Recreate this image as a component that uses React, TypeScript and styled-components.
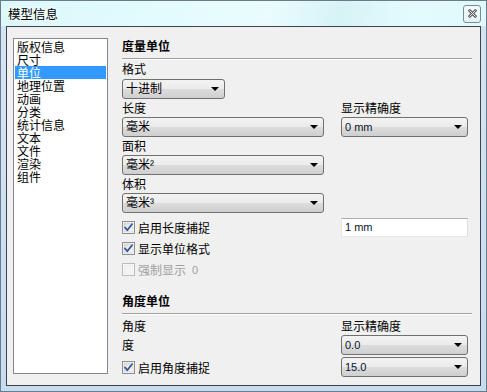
import styled, { createGlobalStyle } from 'styled-components';

const GlobalStyle = createGlobalStyle`
  html, body {
    margin: 0;
    padding: 0;
    background: #ffffff;
  }
  body {
    font-family: 'Liberation Sans', 'Noto Sans CJK SC', sans-serif;
    font-size: 12px;
    color: #000;
  }
  * {
    box-sizing: border-box;
  }
`;

const Window = styled.div`
  width: 487px;
  height: 392px;
  border: 1px solid #6d7b88;
  background: linear-gradient(180deg, #d3e6f6 0%, #c6dcf0 100%);
  display: flex;
  flex-direction: column;
`;

const TitleBar = styled.div`
  height: 25px;
  flex: none;
  display: flex;
  align-items: center;
  justify-content: space-between;
  padding: 0 5px 0 7px;
  background: linear-gradient(
    100deg,
    #dbf8fb 0%,
    #e2fbfd 30%,
    #eafcfd 55%,
    #d6f3f6 70%,
    #e4fbfd 85%,
    #dff9fb 100%
  );
`;

const Title = styled.span`
  font-family: 'Noto Sans CJK SC', sans-serif;
  font-size: 12.5px;
  line-height: 16px;
  text-shadow: 0 0 4px #ffffff, 0 0 6px #ffffff;
`;

const CloseButton = styled.button`
  width: 18px;
  height: 18px;
  padding: 0;
  border: 1px solid #7c8a96;
  border-radius: 3px;
  background: linear-gradient(180deg, #f4fbfd 0%, #e3f4f7 100%);
  display: flex;
  align-items: center;
  justify-content: center;
`;

const Frame = styled.div`
  flex: 1;
  padding: 0 5px 5px 5px;
  display: flex;
`;

const Panel = styled.div`
  flex: 1;
  border: 1px solid #3f4347;
  background: #f0f0f0;
  display: flex;
  align-items: flex-start;
  padding: 11px 0 0 6px;
`;

const ListBox = styled.ul`
  width: 95px;
  height: 336px;
  margin: 0;
  padding: 1px;
  list-style: none;
  border: 1px solid #828790;
  background: #ffffff;
  flex: none;
`;

// rows are packed at a 13px pitch like the original list control
const ListItem = styled.li<{ $selected?: boolean }>`
  font-family: 'Noto Sans CJK SC', sans-serif;
  font-size: 12px;
  line-height: 13px;
  height: 13px;
  padding-left: 2px;
  color: ${(p) => (p.$selected ? '#ffffff' : '#000000')};
  background: ${(p) => (p.$selected ? '#3399ff' : 'transparent')};
`;

const Pane = styled.div`
  margin-left: 14px;
  width: 350px;
  display: flex;
  flex-direction: column;
`;

const Heading = styled.div<{ $top?: number }>`
  margin-top: ${(p) => p.$top || 0}px;
  font-family: 'Noto Sans CJK SC', sans-serif;
  font-weight: 700;
  font-size: 12px;
  line-height: 16px;
  padding-bottom: 4px;
  border-bottom: 1px solid #a0a0a0;
  box-shadow: 0 1px 0 #ffffff;
`;

const Label = styled.div<{ $h?: number; $pt?: number }>`
  font-family: 'Noto Sans CJK SC', sans-serif;
  font-size: 12px;
  height: ${(p) => p.$h || 18}px;
  line-height: ${(p) => (p.$h || 18) - (p.$pt || 0)}px;
  padding-top: ${(p) => p.$pt || 0}px;
  white-space: nowrap;
`;

const Row = styled.div<{ $h?: number; $top?: number }>`
  display: grid;
  grid-template-columns: 202px 127px;
  column-gap: 17px;
  align-items: center;
  height: ${(p) => p.$h || 20}px;
  margin-top: ${(p) => p.$top || 0}px;
`;

const Combo = styled.div<{ $w?: number; $latin?: boolean }>`
  width: ${(p) => (p.$w ? `${p.$w}px` : '100%')};
  height: 20px;
  border: 1px solid #707070;
  border-radius: 3px;
  background: linear-gradient(180deg, #f3f3f3 0%, #ebebeb 50%, #dddddd 50%, #cfcfcf 100%);
  display: flex;
  align-items: center;
  justify-content: space-between;
  padding: 0 5px 0 3px;
  font-family: 'Liberation Sans', 'Noto Sans CJK SC', sans-serif;
  font-size: ${(p) => (p.$latin ? 11 : 12)}px;
  color: ${(p) => (p.$latin ? '#0a1430' : '#000')};
  line-height: 18px;
`;

const Arrow = styled.span`
  width: 0;
  height: 0;
  border-left: 4px solid transparent;
  border-right: 4px solid transparent;
  border-top: 4px solid #000;
`;

const TextInput = styled.div`
  height: 19px;
  border: 1px solid #abadb3;
  border-left-color: #e2e3ea;
  border-right-color: #dbdfe6;
  border-bottom-color: #e3e9ef;
  background: #ffffff;
  padding: 0 3px;
  font-size: 11px;
  line-height: 17px;
  color: #0a1430;
`;

const CheckWrap = styled.label<{ $disabled?: boolean }>`
  display: flex;
  align-items: center;
  gap: 3px;
  font-family: 'Noto Sans CJK SC', sans-serif;
  font-size: 12px;
  color: ${(p) => (p.$disabled ? '#a0a0a0' : '#000')};
  white-space: nowrap;
`;

const Small = styled.span`
  font-family: 'Liberation Sans', sans-serif;
  font-size: 11px;
  margin-left: 3px;
`;

const CheckIcon = ({ checked, disabled }: { checked?: boolean; disabled?: boolean }) => (
  <svg width="13" height="13" viewBox="0 0 13 13">
    <defs>
      <linearGradient id={disabled ? 'cbd' : 'cbg'} x1="0" y1="0" x2="1" y2="1">
        <stop offset="0" stopColor={disabled ? '#f0f0f0' : '#dcdcdc'} />
        <stop offset="1" stopColor={disabled ? '#f8f8f8' : '#fbfbfb'} />
      </linearGradient>
    </defs>
    <rect x="0.5" y="0.5" width="12" height="12" fill="#fff" stroke={disabled ? '#bcbcbc' : '#8e8f8f'} />
    <rect x="2" y="2" width="9" height="9" fill={`url(#${disabled ? 'cbd' : 'cbg'})`} stroke={disabled ? '#e0e0e0' : '#c4c4c4'} strokeWidth="0.6" />
    {checked && (
      <path d="M3 6.5 L5.3 9.2 L10 3.2" fill="none" stroke="#35569c" strokeWidth="1.8" strokeLinecap="round" strokeLinejoin="round" />
    )}
  </svg>
);

const CheckBox = ({ label, checked, disabled, extra }: { label: string; checked?: boolean; disabled?: boolean; extra?: string }) => (
  <CheckWrap $disabled={disabled}>
    <CheckIcon checked={checked} disabled={disabled} />
    <span>{label}</span>
    {extra && <Small>{extra}</Small>}
  </CheckWrap>
);

const Select = ({ value, w, latin }: { value: string; w?: number; latin?: boolean }) => (
  <Combo $w={w} $latin={latin}>
    <span>{value}</span>
    <Arrow />
  </Combo>
);

const items = ['版权信息', '尺寸', '单位', '地理位置', '动画', '分类', '统计信息', '文本', '文件', '渲染', '组件'];

const App = () => (
  <>
    <GlobalStyle />
    <Window>
      <TitleBar>
        <Title>模型信息</Title>
        <CloseButton type="button" aria-label="关闭">
          <svg width="9" height="9" viewBox="0 0 9 9">
            <path d="M1.8 1.8 L7.2 7.2 M7.2 1.8 L1.8 7.2" stroke="#5a5a5a" strokeWidth="2.8" strokeLinecap="square" />
            <path d="M1.8 1.8 L7.2 7.2 M7.2 1.8 L1.8 7.2" stroke="#f4f4f4" strokeWidth="1" strokeLinecap="square" />
          </svg>
        </CloseButton>
      </TitleBar>
      <Frame>
        <Panel>
          <ListBox>
            {items.map((el) => (
              <ListItem key={el} $selected={el === '单位'}>
                {el}
              </ListItem>
            ))}
          </ListBox>
          <Pane>
            <Heading>度量单位</Heading>
            <Label $h={20}>格式</Label>
            <Select value="十进制" w={103} />
            <Row $h={18}>
              <Label>长度</Label>
              <Label>显示精确度</Label>
            </Row>
            <Row>
              <Select value="毫米" />
              <Select value="0 mm" latin />
            </Row>
            <Label>面积</Label>
            <Select value="毫米²" w={202} />
            <Label>体积</Label>
            <Select value="毫米³" w={202} />
            <Row $h={21} $top={4}>
              <CheckBox label="启用长度捕捉" checked />
              <TextInput>1 mm</TextInput>
            </Row>
            <Row $h={21}>
              <CheckBox label="显示单位格式" checked />
            </Row>
            <Row $h={21}>
              <CheckBox label="强制显示" extra="0" disabled />
            </Row>
            <Heading $top={13}>角度单位</Heading>
            <Row $h={21}>
              <Label $h={21} $pt={3}>角度</Label>
              <Label $h={21} $pt={3}>显示精确度</Label>
            </Row>
            <Row>
              <Label>度</Label>
              <Select value="0.0" latin />
            </Row>
            <Row $top={2}>
              <CheckBox label="启用角度捕捉" checked />
              <Select value="15.0" latin />
            </Row>
          </Pane>
        </Panel>
      </Frame>
    </Window>
  </>
);

export default App;
